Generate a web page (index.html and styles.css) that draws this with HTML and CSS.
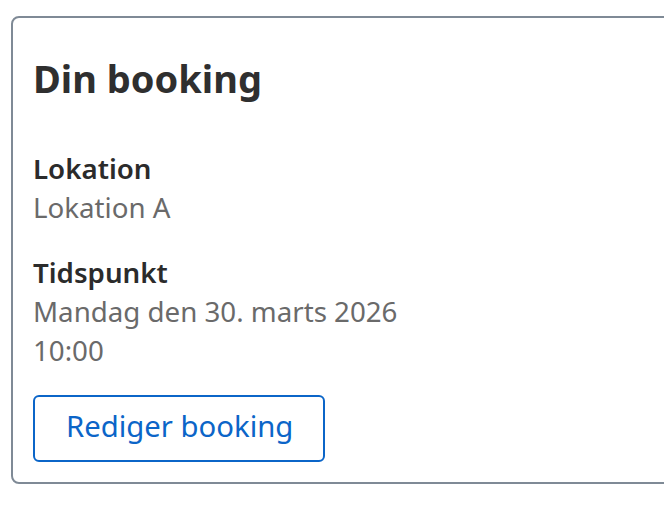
FILE: index.html
```html
<!DOCTYPE html>
<html lang="da">
<head>
<meta charset="utf-8">
<link rel="stylesheet" href="styles.css">
<title>Din booking</title>
</head>
<body>
<section class="card">
  <h2 class="card-title">Din booking</h2>
  <dl class="details">
    <div class="detail">
      <dt class="label">Lokation</dt>
      <dd class="value">Lokation A</dd>
    </div>
    <div class="detail">
      <dt class="label">Tidspunkt</dt>
      <dd class="value">Mandag den 30. marts 2026<br>10:00</dd>
    </div>
  </dl>
  <div class="actions">
    <button class="btn-outline" type="button">Rediger booking</button>
  </div>
</section>
</body>
</html>
```

FILE: styles.css
```css
html, body {
  margin: 0;
  padding: 0;
  background: #ffffff;
  overflow: hidden;
}
body {
  font-family: "Noto Sans", "Open Sans", sans-serif;
  color: #2b2b2b;
  padding: 16px 0 0 11px;
}
.card {
  border: 2px solid #7f8a96;
  border-radius: 8px;
  margin-right: -40px;
  padding: 38px 22px 20px 20px;
}
.card-title {
  margin: 0 0 47px;
  font-size: 38px;
  line-height: 1.2;
  font-weight: 700;
  color: #2f2f2f;
}
.details {
  margin: 0;
}
.detail {
  margin-bottom: 26px;
}
.detail:last-child {
  margin-bottom: 24px;
}
.label {
  font-size: 27.7px;
  line-height: 39.2px;
  font-weight: 600;
  color: #2b2b2b;
}
.value {
  margin: 0;
  font-size: 27.7px;
  line-height: 39.2px;
  color: #6a6a6a;
}
.actions {
  display: flex;
}
.btn-outline {
  font-family: inherit;
  font-size: 29.3px;
  line-height: 40px;
  color: #0b65c8;
  background: #fff;
  border: 2px solid #0b65c8;
  border-radius: 6px;
  padding: 9px 30px 14px 31px;
}
```
